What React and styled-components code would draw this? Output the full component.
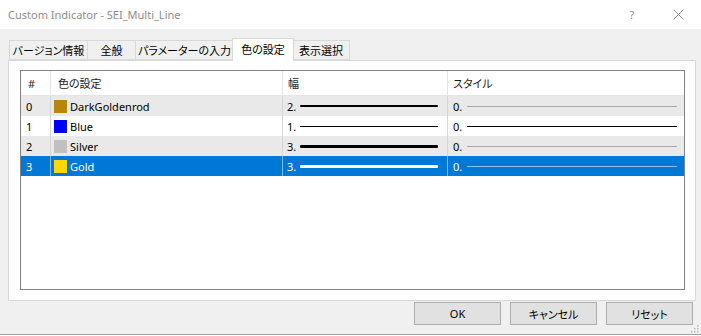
import React from 'react';
import styled, { createGlobalStyle } from 'styled-components';

const Global = createGlobalStyle`
  html, body { margin: 0; padding: 0; background: #fff; }
  body {
    font-family: "Noto Sans", "Noto Sans CJK JP", sans-serif;
    font-size: 11px;
    color: #000;
    font-feature-settings: "palt";
  }
`;

const Window = styled.div`
  position: relative;
  width: 701px;
  height: 334px;
  display: flex;
  flex-direction: column;
  background: #f0f0f0;
  border-bottom: 1px solid #a0a0a0;
`;

const TitleBar = styled.div`
  height: 29px;
  flex: none;
  display: flex;
  align-items: center;
  background: #fff;
  padding-left: 8px;
`;

const Title = styled.div`
  color: #8c8c8c;
  font-size: 11px;
  flex: 1;
  padding-bottom: 1px;
`;

const CaptionButton = styled.div`
  width: 46px;
  height: 29px;
  display: flex;
  align-items: center;
  justify-content: center;
  color: #8c8c8c;
  font-size: 11px;
`;

const Body = styled.div`
  flex: 1;
  display: flex;
  flex-direction: column;
  padding: 9px 5px 0 8px;
`;

const TabStrip = styled.div`
  display: flex;
  align-items: flex-end;
  height: 22px;
  padding-left: 1px;
  position: relative;
  z-index: 1;
`;

const Tab = styled.div`
  box-sizing: border-box;
  width: ${p => p.$w}px;
  height: ${p => (p.$active ? 23 : 20)}px;
  margin: ${p => (p.$active ? '0 -2px -1px -1px' : '0 -1px 0 0')};
  position: relative;
  z-index: ${p => (p.$active ? 2 : 0)};
  border: 1px solid #d9d9d9;
  border-bottom: ${p => (p.$active ? 'none' : '1px solid #d9d9d9')};
  background: ${p => (p.$active ? '#fff' : '#f0f0f0')};
  display: flex;
  align-items: center;
  justify-content: center;
  padding-bottom: ${p => (p.$active ? 3 : 0)}px;
  white-space: nowrap;
  font-size: 11px;
`;

const Panel = styled.div`
  box-sizing: border-box;
  height: 241px;
  background: #fff;
  border: 1px solid #d9d9d9;
  padding: 9px 10px 10px 11px;
  display: flex;
`;

const List = styled.div`
  flex: 1;
  border: 1px solid #828282;
  background: #fff;
  display: grid;
  grid-template-columns: 30px 232px 165px 1fr;
  grid-auto-rows: 20px;
  grid-template-rows: 25px;
  align-content: start;
`;

const HeadCell = styled.div`
  box-sizing: border-box;
  display: flex;
  align-items: center;
  padding-left: ${p => p.$pl}px;
  border-bottom: 1px solid #e5e5e5;
  border-right: ${p => (p.$last ? 'none' : '1px solid #e5e5e5')};
  font-size: 11px;
  color: #1a1a1a;
`;

const Cell = styled.div`
  box-sizing: border-box;
  display: flex;
  align-items: center;
  padding-left: ${p => p.$pl}px;
  background: ${p => (p.$sel ? '#0078d7' : p.$alt ? '#e9e9e9' : '#fff')};
  color: ${p => (p.$sel ? '#fff' : '#000')};
  border-right: ${p => (p.$last ? 'none' : p.$sel ? '1px solid #7fb8ea' : '1px solid #d6d6d6')};
  font-size: 11px;
  white-space: nowrap;
`;

const Swatch = styled.span`
  width: 13px;
  height: 13px;
  flex: none;
  background: ${p => p.$c};
  margin-right: 3px;
`;

const Label = styled.span`
  flex: none;
`;

const Stroke = styled.span`
  flex: 1;
  height: ${p => p.$h}px;
  background: ${p => p.$c};
  margin: 0 ${p => p.$mr}px 0 ${p => p.$ml}px;
  border-radius: 1px;
`;

const Buttons = styled.div`
  display: flex;
  justify-content: flex-end;
  gap: 9px;
  margin-top: 1px;
  padding-right: 3px;
`;

const Button = styled.div`
  box-sizing: border-box;
  width: 87px;
  height: 23px;
  display: flex;
  align-items: center;
  justify-content: center;
  background: #e1e1e1;
  border: 1px solid #adadad;
  font-size: 11px;
`;

const Grip = styled.svg`
  position: absolute;
  right: 2px;
  bottom: 1px;
`;

const rows = [
  { n: 0, name: 'DarkGoldenrod', c: '#b8860b', w: 2, style: 0, styleColor: '#a8a8a8' },
  { n: 1, name: 'Blue', c: '#0000ff', w: 1, style: 0, styleColor: '#000' },
  { n: 2, name: 'Silver', c: '#c0c0c0', w: 3, style: 0, styleColor: '#a8a8a8' },
  { n: 3, name: 'Gold', c: '#ffd700', w: 3, style: 0, styleColor: '#8fc0ec', sel: true },
];

const tabs = [
  { t: 'バージョン情報', w: 79 },
  { t: '全般', w: 49 },
  { t: 'パラメーターの入力', w: 99 },
  { t: '色の設定', w: 62, active: true },
  { t: '表示選択', w: 58 },
];

export default function App() {
  return (
    <>
      <Global />
      <Window>
        <TitleBar>
          <Title>Custom Indicator - SEI_Multi_Line</Title>
          <CaptionButton>?</CaptionButton>
          <CaptionButton>
            <svg width="11" height="11" viewBox="0 0 11 11">
              <path d="M0.5 0.5 L10.5 10.5 M10.5 0.5 L0.5 10.5" stroke="#8c8c8c" strokeWidth="1" fill="none" />
            </svg>
          </CaptionButton>
        </TitleBar>
        <Body>
          <TabStrip>
            {tabs.map(t => (
              <Tab key={t.t} $w={t.w} $active={t.active}>{t.t}</Tab>
            ))}
          </TabStrip>
          <Panel>
            <List>
              <HeadCell $pl={7}>#</HeadCell>
              <HeadCell $pl={7}>色の設定</HeadCell>
              <HeadCell $pl={5}>幅</HeadCell>
              <HeadCell $pl={5} $last>スタイル</HeadCell>
              {rows.map((r, i) => {
                const alt = i % 2 === 0;
                const lineColor = r.sel ? '#fff' : '#000';
                return (
                  <React.Fragment key={r.n}>
                    <Cell $pl={5} $alt={alt} $sel={r.sel}>{r.n}</Cell>
                    <Cell $pl={3} $alt={alt} $sel={r.sel}>
                      <Swatch $c={r.c} />
                      <Label>{r.name}</Label>
                    </Cell>
                    <Cell $pl={4} $alt={alt} $sel={r.sel}>
                      <Label>{r.w}.</Label>
                      <Stroke $h={r.w} $c={lineColor} $ml={4} $mr={9} />
                    </Cell>
                    <Cell $pl={5} $alt={alt} $sel={r.sel} $last>
                      <Label>{r.style}.</Label>
                      <Stroke $h={1} $c={r.styleColor} $ml={5} $mr={7} />
                    </Cell>
                  </React.Fragment>
                );
              })}
            </List>
          </Panel>
          <Buttons>
            <Button>OK</Button>
            <Button>キャンセル</Button>
            <Button>リセット</Button>
          </Buttons>
        </Body>
        <Grip width="10" height="10" viewBox="0 0 10 10">
          {[[8, 2], [8, 5], [8, 8], [5, 5], [5, 8], [2, 8]].map(([x, y]) => (
            <rect key={`${x}-${y}`} x={x} y={y} width="1.5" height="1.5" fill="#bcbcbc" />
          ))}
        </Grip>
      </Window>
    </>
  );
}
